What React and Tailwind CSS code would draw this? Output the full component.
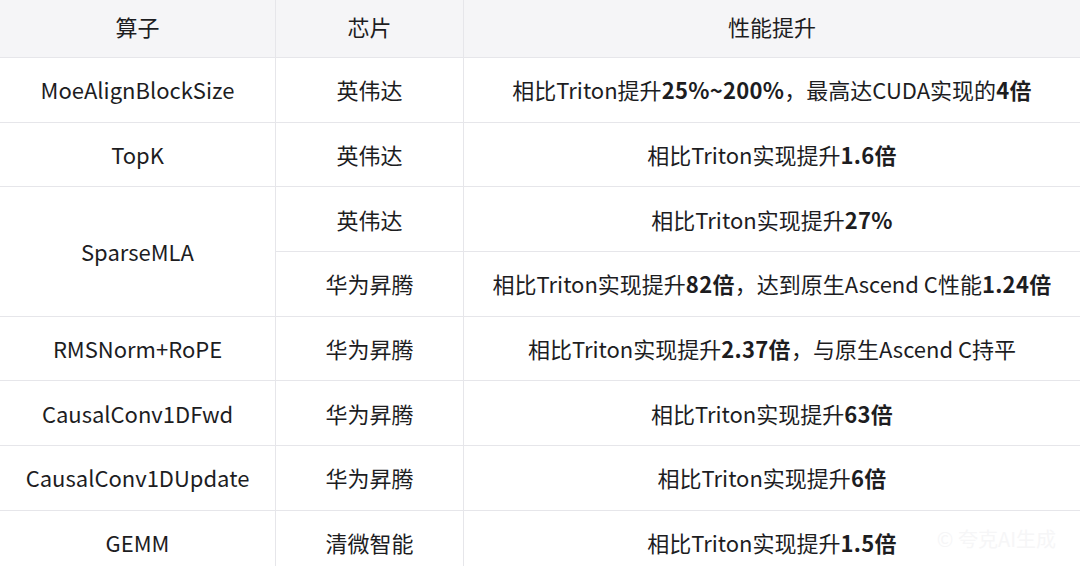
import React from 'react'

const rows = [
  { op: 'MoeAlignBlockSize', chip: '英伟达', perf: ['相比Triton提升', <b key="a">25%~200%</b>, '，最高达CUDA实现的', <b key="b">4倍</b>] },
  { op: 'TopK', chip: '英伟达', perf: ['相比Triton实现提升', <b key="a">1.6倍</b>] },
  { op: 'SparseMLA', span: 2, chip: '英伟达', perf: ['相比Triton实现提升', <b key="a">27%</b>] },
  { chip: '华为昇腾', perf: ['相比Triton实现提升', <b key="a">82倍</b>, '，达到原生Ascend C性能', <b key="b">1.24倍</b>] },
  { op: 'RMSNorm+RoPE', chip: '华为昇腾', perf: ['相比Triton实现提升', <b key="a">2.37倍</b>, '，与原生Ascend C持平'] },
  { op: 'CausalConv1DFwd', chip: '华为昇腾', perf: ['相比Triton实现提升', <b key="a">63倍</b>] },
  { op: 'CausalConv1DUpdate', chip: '华为昇腾', perf: ['相比Triton实现提升', <b key="a">6倍</b>] },
  { op: 'GEMM', chip: '清微智能', perf: ['相比Triton实现提升', <b key="a">1.5倍</b>] },
]

const cell = 'border border-[#e6e6ea] text-center align-middle'

export default function App() {
  return (
    <div
      className="relative w-[1080px] h-[566px] overflow-hidden bg-white text-[#1d1d1f] text-[22px]"
      style={{ fontFamily: '"Noto Sans CJK SC", "Noto Sans", sans-serif' }}
    >
      <table className="w-[1082px] -ml-px -mt-px border-collapse table-fixed">
        <colgroup>
          <col className="w-[276px]" />
          <col className="w-[188px]" />
          <col />
        </colgroup>
        <thead>
          <tr className="h-[58px] bg-[#f5f5f7]">
            <th className={`${cell} font-normal pb-[5px]`}>算子</th>
            <th className={`${cell} font-normal pb-[5px]`}>芯片</th>
            <th className={`${cell} font-normal pb-[5px]`}>性能提升</th>
          </tr>
        </thead>
        <tbody>
          {rows.map((r, i) => (
            <tr key={i} className="h-[64.7px]">
              {r.op && (
                <td rowSpan={r.span || 1} className={cell}>
                  {r.op}
                </td>
              )}
              <td className={cell}>{r.chip}</td>
              <td className={`${cell} [&_b]:font-bold [&_b]:tracking-[0.3px]`}>{r.perf}</td>
            </tr>
          ))}
        </tbody>
      </table>
      <div className="absolute right-[24px] bottom-[12px] text-[20px] text-[#f6f6f7] select-none">
        © 夸克AI生成
      </div>
    </div>
  )
}
